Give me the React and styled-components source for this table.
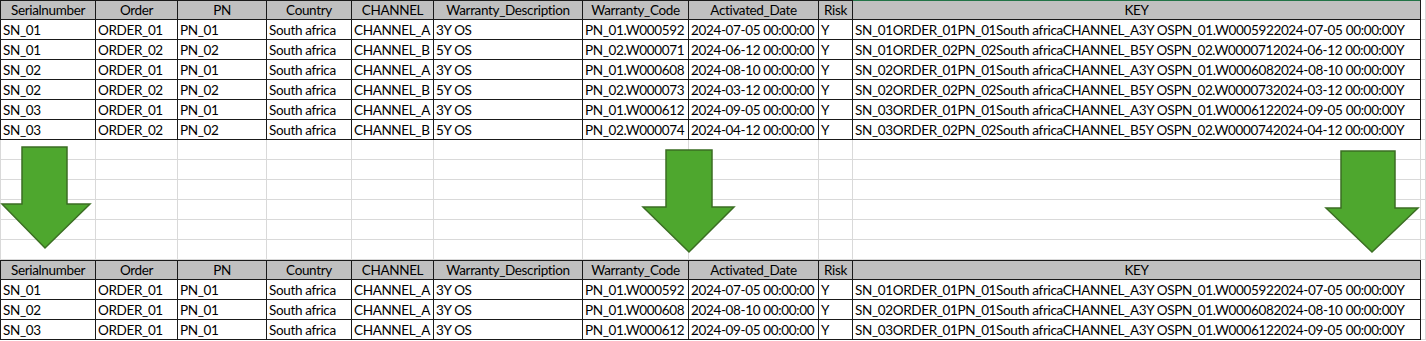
import styled, { createGlobalStyle } from "styled-components";

const GlobalStyle = createGlobalStyle`
  html, body {
    margin: 0;
    padding: 0;
    background: #ffffff;
    overflow: hidden;
  }
  body {
    font-family: Lato, "Open Sans", "Liberation Sans", sans-serif;
  }
`;

const columns = [
  "Serialnumber",
  "Order",
  "PN",
  "Country",
  "CHANNEL",
  "Warranty_Description",
  "Warranty_Code",
  "Activated_Date",
  "Risk",
  "KEY",
];
const widths = [96, 82, 89, 85, 82, 149, 106, 130, 34, 568, 5];

const source = [
  ["SN_01", "ORDER_01", "PN_01", "South africa", "CHANNEL_A", "3Y OS", "PN_01.W000592", "2024-07-05 00:00:00", "Y"],
  ["SN_01", "ORDER_02", "PN_02", "South africa", "CHANNEL_B", "5Y OS", "PN_02.W000071", "2024-06-12 00:00:00", "Y"],
  ["SN_02", "ORDER_01", "PN_01", "South africa", "CHANNEL_A", "3Y OS", "PN_01.W000608", "2024-08-10 00:00:00", "Y"],
  ["SN_02", "ORDER_02", "PN_02", "South africa", "CHANNEL_B", "5Y OS", "PN_02.W000073", "2024-03-12 00:00:00", "Y"],
  ["SN_03", "ORDER_01", "PN_01", "South africa", "CHANNEL_A", "3Y OS", "PN_01.W000612", "2024-09-05 00:00:00", "Y"],
  ["SN_03", "ORDER_02", "PN_02", "South africa", "CHANNEL_B", "5Y OS", "PN_02.W000074", "2024-04-12 00:00:00", "Y"],
];
const withKey = (r) => [...r, r.join("")];
const topRows = source.map(withKey);
const bottomRows = [source[0], source[2], source[4]].map(withKey);

const arrows = [
  { left: 1, top: 146, w: 90, h: 103, s1: 21, s2: 66, head: 58, tip: 44 },
  { left: 642, top: 149, w: 93, h: 104, s1: 24, s2: 70, head: 58, tip: 47 },
  { left: 1325, top: 150, w: 94, h: 103, s1: 16, s2: 70, head: 58, tip: 47 },
];

function App() {
  const emptyRow = (key) => (
    <Row key={key}>
      {widths.map((_, i) => (
        <Cell key={i} $kind="empty" $first={i === 0} />
      ))}
    </Row>
  );

  const header = (key, selected) => (
    <Row key={key}>
      {columns.map((c, i) => (
        <Cell
          key={c}
          $kind="head"
          $first={i === 0}
          $active={selected && c === "KEY"}
        >
          {c}
        </Cell>
      ))}
      <Cell $kind="empty" />
    </Row>
  );

  const dataRow = (r, key) => (
    <Row key={key}>
      {r.map((v, i) => (
        <Cell key={i} $kind="data" $first={i === 0}>
          {v}
        </Cell>
      ))}
      <Cell $kind="empty" />
    </Row>
  );

  return (
    <>
      <GlobalStyle />
      <Sheet>
        {header("h1", true)}
        {topRows.map((r, i) => dataRow(r, "t" + i))}
        {[0, 1, 2, 3, 4, 5].map((i) => emptyRow("e" + i))}
        {header("h2", false)}
        {bottomRows.map((r, i) => dataRow(r, "b" + i))}
        {arrows.map((a, i) => (
          <Arrow
            key={i}
            $left={a.left}
            $top={a.top}
            width={a.w}
            height={a.h}
            viewBox={`0 0 ${a.w} ${a.h}`}
          >
            <polygon
              points={`${a.s1},1 ${a.s2},1 ${a.s2},${a.head} ${a.w - 1},${a.head} ${a.tip},${a.h - 1} 1,${a.head} ${a.s1},${a.head}`}
              fill="#4ea72e"
              stroke="#3b6e23"
              strokeWidth="1.5"
              strokeLinejoin="miter"
            />
          </Arrow>
        ))}
      </Sheet>
    </>
  );
}

export default App;

const Sheet = styled.div`
  position: relative;
  width: 1426px;
  display: flex;
  flex-direction: column;
`;

const Row = styled.div`
  display: grid;
  grid-template-columns: ${widths.map((w) => w + "px").join(" ")};
  height: 20px;
`;

const Cell = styled.div`
  box-sizing: border-box;
  height: 20px;
  padding: 0 2px;
  font-size: 13.5px;
  letter-spacing: -0.35px;
  line-height: 20px;
  color: #000;
  white-space: nowrap;
  overflow: hidden;
  border-right: 1px solid
    ${(p) => (p.$kind === "empty" ? "#d9d9d9" : "#1a1a1a")};
  border-bottom: 1px solid
    ${(p) => (p.$kind === "empty" ? "#d9d9d9" : "#1a1a1a")};
  border-left: ${(p) =>
    p.$first
      ? `1px solid ${p.$kind === "empty" ? "#d9d9d9" : "#1a1a1a"}`
      : "none"};
  background: ${(p) => (p.$kind === "head" ? "#c0c0c0" : "#ffffff")};
  text-align: ${(p) => (p.$kind === "head" ? "center" : "left")};
  box-shadow: ${(p) =>
    p.$kind === "head"
      ? `inset 0 1px 0 ${p.$active ? "#217346" : "#1a1a1a"}`
      : "none"};
`;

const Arrow = styled.svg`
  position: absolute;
  left: ${(p) => p.$left}px;
  top: ${(p) => p.$top}px;
  overflow: visible;
`;
